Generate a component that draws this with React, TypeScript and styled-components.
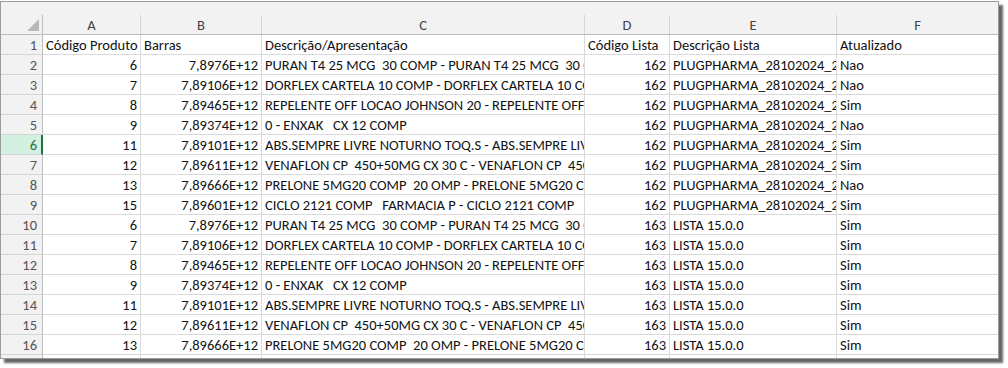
import { Fragment } from 'react';
import styled, { createGlobalStyle } from 'styled-components';

const GlobalStyle = createGlobalStyle`
  html, body {
    margin: 0;
    padding: 0;
    background: #ffffff;
  }
  body {
    font-family: Calibri, Carlito, "Liberation Sans", sans-serif;
  }
`;

const Page = styled.div`
  padding-top: 1px;
  width: 1008px;
  height: 367px;
  box-sizing: border-box;
`;

const Frame = styled.div`
  width: 999px;
  height: 358px;
  box-sizing: border-box;
  border: 1px solid #9c9c9c;
  background: #ffffff;
  box-shadow: 4px 4px 2px rgba(0, 0, 0, 0.6);
  overflow: hidden;
`;

const Sheet = styled.div`
  display: grid;
  grid-template-columns: 42px 98px 121px 323px 85px 167px 1fr;
  grid-template-rows: 33px;
  grid-auto-rows: 20px;
  font-size: 14.5px;
  color: #111;
`;

const HeaderBand = styled.div`
  grid-column: 1 / -1;
  display: grid;
  grid-template-columns: subgrid;
  background: #f2f2f2;
  border-bottom: 1px solid #bcbcbc;
  box-sizing: border-box;
`;

const Corner = styled.div`
  position: relative;
  border-right: 1px solid #bcbcbc;
  margin-top: 13px;
  &::after {
    content: '';
    position: absolute;
    right: 3px;
    bottom: 3px;
    width: 0;
    height: 0;
    border-left: 12px solid transparent;
    border-bottom: 12px solid #b9b9b9;
  }
`;

const ColHead = styled.div<{ $last?: boolean }>`
  margin-top: 13px;
  display: flex;
  align-items: center;
  justify-content: center;
  color: #444;
  border-right: ${(p) => (p.$last ? 'none' : '1px solid #d4d4d4')};
`;

const RowHead = styled.div<{ $active?: boolean }>`
  display: flex;
  align-items: center;
  justify-content: flex-end;
  padding-right: ${(p) => (p.$active ? '4px' : '5px')};
  box-sizing: border-box;
  color: ${(p) => (p.$active ? '#1e6e42' : '#555')};
  background: ${(p) => (p.$active ? '#d3f0e0' : '#f2f2f2')};
  border-bottom: 1px solid #d4d4d4;
  border-right: ${(p) => (p.$active ? '2px solid #217346' : '1px solid #bcbcbc')};
`;

const Cell = styled.div<{ $right?: boolean; $last?: boolean }>`
  display: flex;
  align-items: center;
  justify-content: ${(p) => (p.$right ? 'flex-end' : 'flex-start')};
  padding: 0 3px;
  box-sizing: border-box;
  white-space: pre;
  overflow: hidden;
  border-bottom: 1px solid #dadada;
  border-right: ${(p) => (p.$last ? 'none' : '1px solid #dadada')};
`;

const letters = ['A', 'B', 'C', 'D', 'E', 'F'];

const header = ['Código Produto', 'Barras', 'Descrição/Apresentação', 'Código Lista', 'Descrição Lista', 'Atualizado'];

const products: [string, string, string][] = [
  ['6', '7,8976E+12', 'PURAN T4 25 MCG  30 COMP - PURAN T4 25 MCG  30 COMP'],
  ['7', '7,89106E+12', 'DORFLEX CARTELA 10 COMP - DORFLEX CARTELA 10 COMP'],
  ['8', '7,89465E+12', 'REPELENTE OFF LOCAO JOHNSON 20 - REPELENTE OFF LOCAO JOHNSON 20'],
  ['9', '7,89374E+12', '0 - ENXAK   CX 12 COMP'],
  ['11', '7,89101E+12', 'ABS.SEMPRE LIVRE NOTURNO TOQ.S - ABS.SEMPRE LIVRE NOTURNO TOQ.S'],
  ['12', '7,89611E+12', 'VENAFLON CP  450+50MG CX 30 C - VENAFLON CP  450+50MG CX 30 C'],
  ['13', '7,89666E+12', 'PRELONE 5MG20 COMP  20 OMP - PRELONE 5MG20 COMP  20 OMP'],
  ['15', '7,89601E+12', 'CICLO 2121 COMP   FARMACIA P - CICLO 2121 COMP'],
];

const firstFlags = ['Nao', 'Nao', 'Sim', 'Nao', 'Sim', 'Sim', 'Nao', 'Sim'];

const rows = [
  ...products.map((p, i) => [...p, '162', 'PLUGPHARMA_28102024_2', firstFlags[i]]),
  ...products.slice(0, 7).map((p) => [...p, '163', 'LISTA 15.0.0', 'Sim']),
];

const rightAligned = [true, true, false, true, false, false];

export default function App() {
  return (
    <>
      <GlobalStyle />
      <Page>
        <Frame>
          <Sheet>
            <HeaderBand>
              <Corner />
              {letters.map((l, i) => (
                <ColHead key={l} $last={i === letters.length - 1}>
                  {l}
                </ColHead>
              ))}
            </HeaderBand>
            <RowHead>1</RowHead>
            {header.map((h, i) => (
              <Cell key={h} $last={i === header.length - 1}>
                {h}
              </Cell>
            ))}
            {rows.map((r, ri) => (
              <Fragment key={ri}>
                <RowHead $active={ri + 2 === 6}>{ri + 2}</RowHead>
                {r.map((v, ci) => (
                  <Cell key={ci} $right={rightAligned[ci]} $last={ci === r.length - 1}>
                    {v}
                  </Cell>
                ))}
              </Fragment>
            ))}
            <RowHead />
            {letters.map((l, i) => (
              <Cell key={`e${l}`} $last={i === letters.length - 1} />
            ))}
          </Sheet>
        </Frame>
      </Page>
    </>
  );
}
